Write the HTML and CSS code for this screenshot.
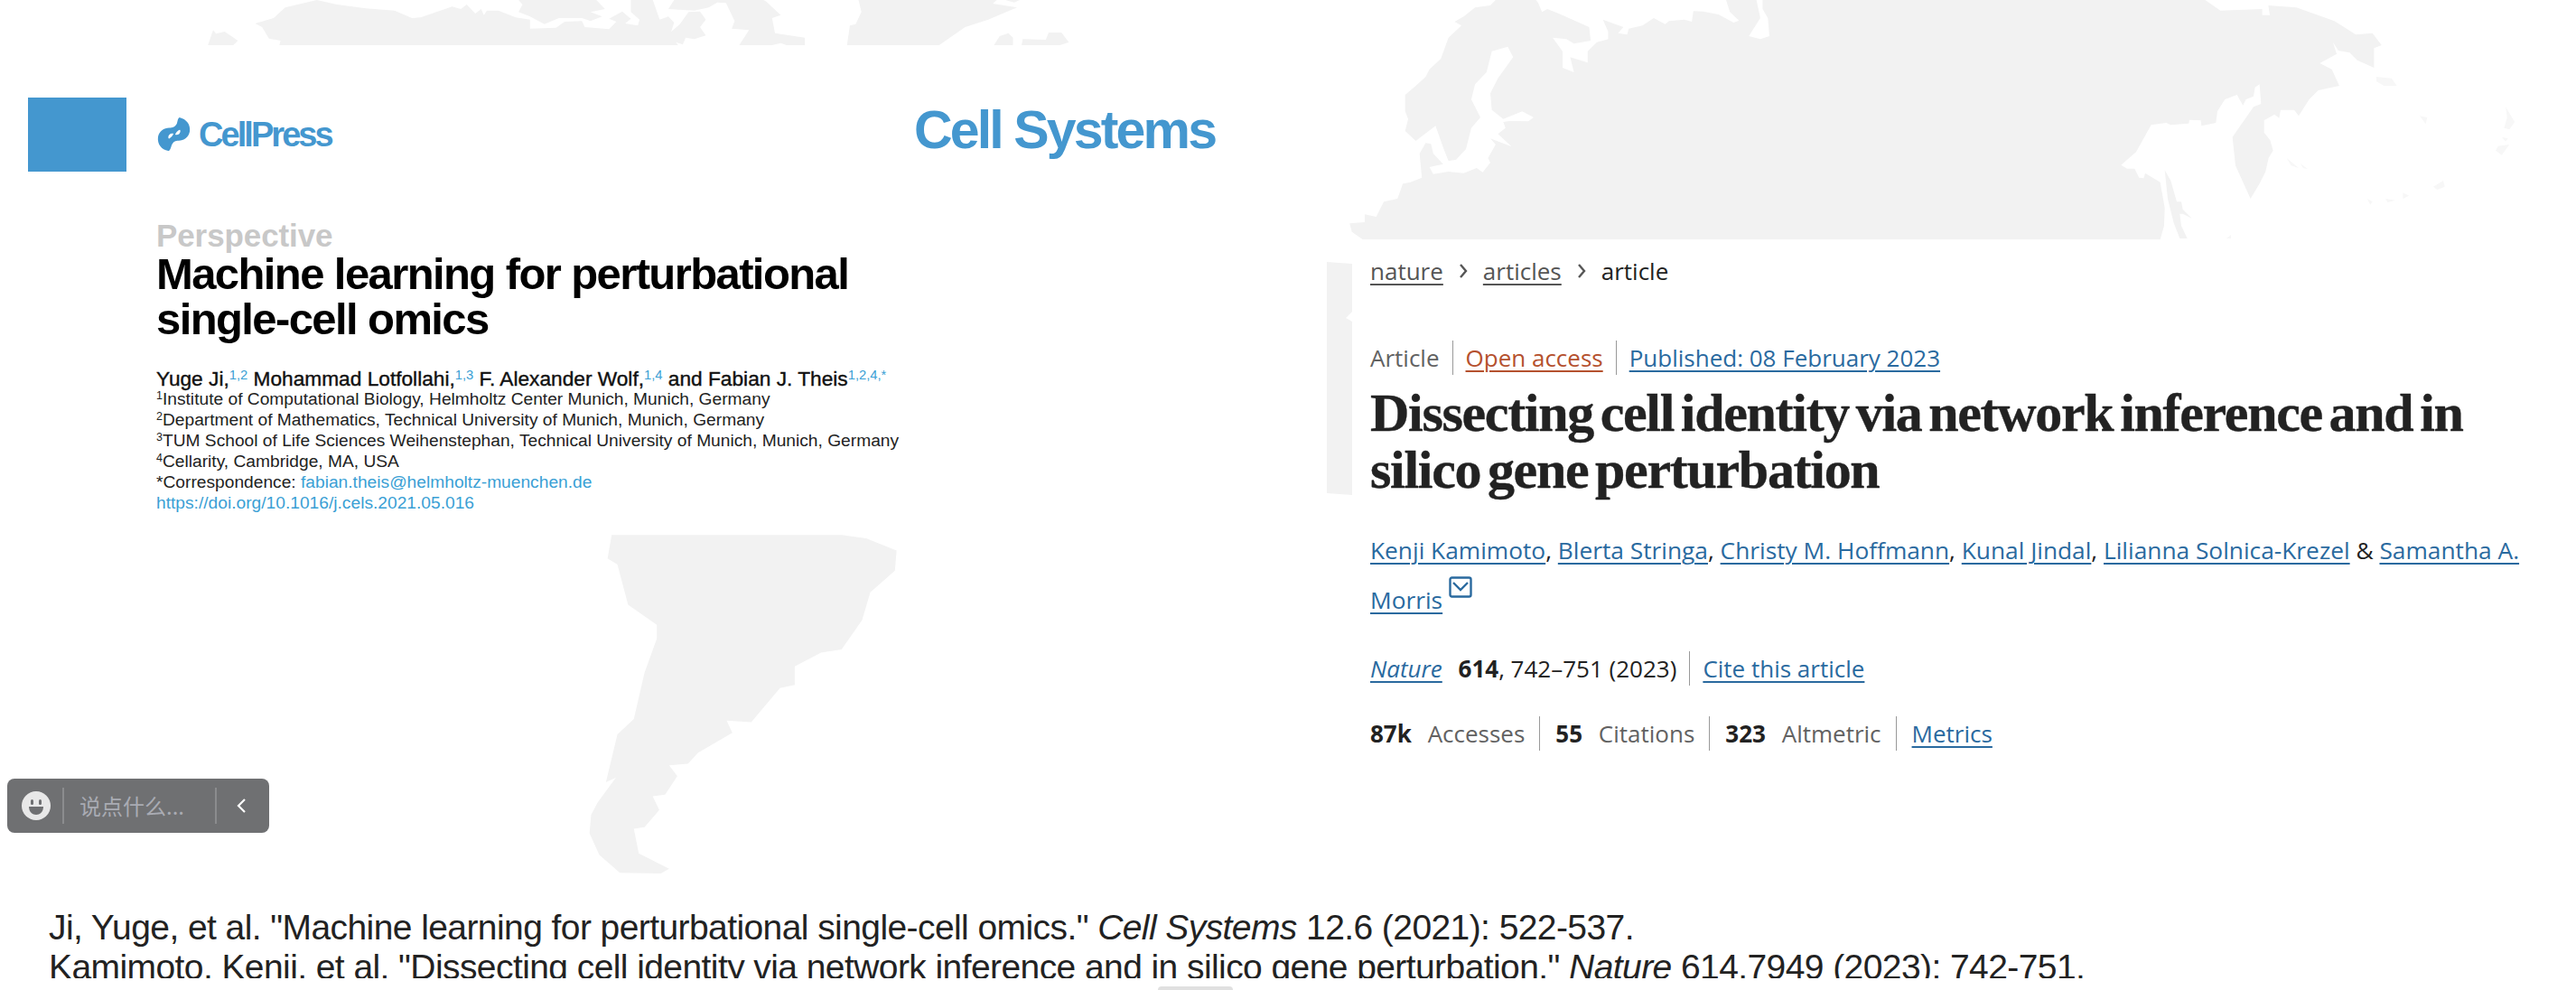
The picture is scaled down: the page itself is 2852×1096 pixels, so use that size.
FILE: index.html
```html
<!DOCTYPE html>
<html lang="en">
<head>
<meta charset="utf-8">
<title>Perturbation papers</title>
<link rel="stylesheet" href="styles.css">
</head>
<body>
<main class="slide">
  <svg class="map" viewBox="0 0 2852 1096" width="2852" height="1096" aria-hidden="true">
    <g class="land" transform="translate(220,0) scale(0.638,0.3333)">
      <path d="M16 150L25 100L30 112L45 105L68 135L60 150Z"/>
      <path d="M140 150L142 135L122 128L110 90L98 78L130 60L150 25L205 0L240 15L290 28L340 35L370 60L385 58L440 22L455 30L465 15L480 45L490 30L495 50L500 35L520 35L550 58L575 65L575 95L620 92L635 72L665 70L670 90L712 97L725 72L712 62L735 38L750 62L740 78L762 85L765 65L750 40L750 0L788 0L800 65L815 55L825 75L820 105L835 80L850 40L870 38L880 65L870 90L880 118L860 130L845 125L840 148L828 140L832 150Z"/>
      <path d="M555 0L562 15L555 40L575 55L600 80L625 60L665 60L680 70L700 55L680 40L705 30L690 0Z"/>
      <path d="M825 0L815 30L860 35L885 25L900 8L915 10L930 70L925 95L955 100L938 150L995 150L1010 143L1020 150L1052 150L1052 125L1000 110L995 60L1010 50L985 5L980 0Z"/>
      <path d="M1125 150L1130 85L1140 80L1150 40L1145 0L1385 0L1378 12L1420 25L1370 65L1330 90L1285 150Z"/>
      <path d="M1400 0L1425 0L1415 8Z"/>
      <path d="M1380 150L1390 120L1405 110L1413 125L1413 150Z"/>
      <path d="M1428 150L1430 130L1470 132L1475 108L1497 108L1510 140L1495 150Z"/>
    </g>
    <g class="land" transform="translate(1490,0) scale(0.842,0.3333)">
      <path d="M197 0L190 18L170 25L155 55L143 72L152 85L135 125L130 160L125 195L110 230L105 255L92 285L78 315L78 370L82 395L78 435L92 468L118 418L128 490L135 535L145 530L158 495L165 425L177 390L165 330L170 280L185 240L192 170L213 155L220 190L200 260L190 310L192 365L207 395L232 370L247 390L240 403L215 402L207 405L210 425L200 445L218 487L190 460L197 480L187 525L190 540L180 572L172 558L155 575L135 570L115 578L110 555L122 548L128 545L115 510L112 478L105 475L97 510L100 590L85 605L75 610L68 660L50 670L40 720L25 712L25 738L5 742L8 770L22 795L1000 795L1000 180L1303 180L1298 140L1305 168L1320 175L1330 200L1352 225L1352 160L1362 150L1350 110L1328 115L1300 70L1250 25L1213 18L1215 50L1205 50L1205 30L1150 35L1130 0L548 0L548 30L555 60L557 120L545 130L530 120L545 60L540 0L500 0L505 40L517 68L510 75L490 48L470 38L457 37L455 72L445 65L425 70L420 80L405 60L390 85L372 95L370 115L358 110L365 90L338 65L345 105L345 130L330 140L318 170L318 208L295 190L300 240L285 225L285 170L272 125L290 130L300 145L322 135L320 90L280 45L265 30L258 40L253 10L250 0Z"/>
      <path class="isle" d="M1355 255L1375 260L1382 285L1365 285L1355 270Z"/>
      <path class="isle" d="M1525 355L1537 405L1530 430L1523 425L1527 390Z"/>
      <path class="isle" d="M1515 485L1530 480L1520 515L1512 500Z"/>
      <path class="isle" d="M1520 455L1528 460L1525 470Z"/>
      <path class="isle" d="M1412 385L1422 390L1420 412Z"/>
      <path class="isle" d="M1343 660L1350 670L1347 680Z"/>
      <path class="isle" d="M1367 660L1380 665L1370 672Z"/>
      <path class="isle" d="M1390 640L1398 650L1390 660Z"/>
      <path class="isle" d="M1430 620L1443 600L1445 620L1435 630Z"/>
    </g>
    <g class="land" transform="translate(2300,60) scale(0.3333)">
      <path d="M0 615L275 615L288 570L290 510L275 425L225 395L220 412L205 410L190 380L165 380L145 368L195 325L245 235L295 228L310 235L370 230L372 218L410 220L412 238L460 228L465 190L490 150L530 135L550 170L560 150L585 140L590 110L605 100L610 165L585 175L515 275L525 370L575 480L605 430L625 390L635 345L650 320L640 285L620 260L620 220L655 200L670 212L675 185L720 185L735 205L770 150L800 120L870 105L845 50L805 30L860 0L0 0Z"/>
      <path d="M290 385L310 420L330 490L345 490L350 515L380 545L350 530L340 530L345 570L365 612L340 612L320 560L300 480Z"/>
      <path class="isle" d="M695 345L735 378L710 370Z"/>
      <path class="isle" d="M740 362L765 382L750 378Z"/>
      <path class="isle" d="M495 612L510 600L510 612Z"/>
    </g>
    <g class="land" transform="translate(0,560) scale(0.909,0.342)">
      <path d="M745 94L1025 94L1055 105L1092 145L1090 210L1060 280L1050 370L1025 465L1000 475L968 520L968 580L950 590L915 700L885 695L892 735L850 800L838 835L815 840L825 875L810 935L795 940L803 985L785 1040L772 1045L778 1125L815 1175L805 1190L755 1188L730 1130L718 1060L720 1000L728 960L750 880L738 895L752 740L772 690L785 540L800 430L800 385L765 320L752 190L740 170Z"/>
    </g>
    <path class="strip" d="M1469 290L1497 292L1497 345L1490 352L1497 356L1497 548L1469 546Z"/>
  </svg>

  <div class="papers">
    <section class="cell">
      <header class="cell-head">
        <div class="cell-tab"></div>
        <div class="cellpress">
          <svg class="cellpress-mark" viewBox="0 0 40 40" width="38" height="38" aria-hidden="true">
            <path d="M26 0C34 2 39 8 38 16C37 23 31 27 25 27C21 27 19 28 17 32C16 35 15 39 13 39C5 38 0 31 1 23C2 16 8 12 14 12C18 12 21 11 23 7C24 4 24 1 26 0ZM19 19C16 18 13 20 13 23C13 25 14 25 15 24C17 23 18 21 19 19ZM21 20C24 21 27 19 27 16C27 14 26 14 25 15C23 16 22 18 21 20Z"/>
          </svg>
          <span class="cellpress-name">CellPress</span>
        </div>
        <div class="journal">Cell Systems</div>
      </header>
      <div class="cell-body">
        <div class="kicker">Perspective</div>
        <h1 class="cell-title">Machine learning for perturbational<br>single-cell omics</h1>
        <p class="cell-authors">Yuge Ji,<sup>1,2</sup> Mohammad Lotfollahi,<sup>1,3</sup> F. Alexander Wolf,<sup>1,4</sup> and Fabian J. Theis<sup>1,2,4,*</sup></p>
        <ul class="affils">
          <li><sup>1</sup>Institute of Computational Biology, Helmholtz Center Munich, Munich, Germany</li>
          <li><sup>2</sup>Department of Mathematics, Technical University of Munich, Munich, Germany</li>
          <li><sup>3</sup>TUM School of Life Sciences Weihenstephan, Technical University of Munich, Munich, Germany</li>
          <li><sup>4</sup>Cellarity, Cambridge, MA, USA</li>
          <li>*Correspondence: <span class="cyan">fabian.theis@helmholtz-muenchen.de</span></li>
          <li class="cyan">https://doi.org/10.1016/j.cels.2021.05.016</li>
        </ul>
      </div>
    </section>

    <section class="nature">
      <nav class="crumbs">
        <a class="crumb">nature</a>
        <svg class="chev" viewBox="0 0 12 18" width="12" height="18" aria-hidden="true"><path d="M3 2L9 9L3 16"/></svg>
        <a class="crumb">articles</a>
        <svg class="chev" viewBox="0 0 12 18" width="12" height="18" aria-hidden="true"><path d="M3 2L9 9L3 16"/></svg>
        <span class="crumb-now">article</span>
      </nav>
      <ul class="meta meta-type">
        <li class="muted">Article</li>
        <li><a class="rust">Open access</a></li>
        <li><a class="blue">Published: 08 February 2023</a></li>
      </ul>
      <h2 class="nature-title">Dissecting cell identity via network inference and in silico gene perturbation</h2>
      <p class="nature-authors"><a class="blue">Kenji Kamimoto</a>, <a class="blue">Blerta Stringa</a>, <a class="blue">Christy M. Hoffmann</a>, <a class="blue">Kunal Jindal</a>, <a class="blue">Lilianna Solnica-Krezel</a> &amp; <a class="blue">Samantha A.</a> <a class="blue">Morris</a> <svg class="mail" viewBox="0 0 26 24" width="26" height="24" aria-hidden="true"><rect x="1.5" y="1.5" width="23" height="21" rx="2"/><path d="M5 7L13 15L21 7"/></svg></p>
      <ul class="meta meta-cite">
        <li><a class="blue ital">Nature</a> <b class="vol">614</b>, 742–751 (2023)</li>
        <li><a class="blue">Cite this article</a></li>
      </ul>
      <ul class="meta meta-stats">
        <li><b class="stat">87k</b> <span class="muted">Accesses</span></li>
        <li><b class="stat">55</b> <span class="muted">Citations</span></li>
        <li><b class="stat">323</b> <span class="muted">Altmetric</span></li>
        <li><a class="blue">Metrics</a></li>
      </ul>
    </section>
  </div>

  <footer class="refs">
    <p>Ji, Yuge, et al. "Machine learning for perturbational single-cell omics." <i>Cell Systems</i> 12.6 (2021): 522-537.</p>
    <p>Kamimoto, Kenji, et al. "Dissecting cell identity via network inference and in silico gene perturbation." <i>Nature</i> 614.7949 (2023): 742-751.</p>
  </footer>

  <aside class="chat">
    <svg class="smile" viewBox="0 0 32 32" width="32" height="32" aria-hidden="true">
      <circle class="smile-face" cx="16" cy="16" r="16"/>
      <rect class="smile-ink" x="10" y="9" width="3" height="6" rx="1.5"/>
      <rect class="smile-ink" x="19" y="9" width="3" height="6" rx="1.5"/>
      <path class="smile-ink" d="M8 17H24C24 23 20 26 16 26C12 26 8 23 8 17Z"/>
    </svg>
    <span class="chat-text">说点什么...</span>
    <span class="chat-toggle"><svg viewBox="0 0 12 18" width="12" height="18" aria-hidden="true"><path d="M10 2L3 9L10 16"/></svg></span>
  </aside>
  <div class="tab-peek"></div>
</main>
</body>
</html>
```

FILE: styles.css
```css
* { box-sizing: border-box; }
html, body { margin: 0; padding: 0; background: #fff; }
body { font-family: "Liberation Sans", Arial, sans-serif; }
ul { list-style: none; margin: 0; padding: 0; }
p, h1, h2 { margin: 0; }

.slide { position: relative; width: 2852px; height: 1096px; overflow: hidden; background: #fff; }
.map { position: absolute; left: 0; top: 0; }
.land path { fill: #f2f2f2; }
.land .isle { fill: #f7f7f7; }
.strip { fill: #f2f2f2; }

.papers { position: relative; display: flex; height: 1000px; }

.cell { width: 1517px; flex: none; padding-top: 108px; }
.cell-head { display: flex; align-items: flex-start; }
.cell-tab { width: 109px; height: 82px; margin-left: 31px; background: #4497cf; }
.cellpress { display: flex; align-items: center; gap: 8px; margin-left: 34px; margin-top: 22px; color: #4497cf; }
.cellpress-mark { fill: #4497cf; fill-rule: evenodd; }
.cellpress-name { font-size: 38px; font-weight: 700; letter-spacing: -2.95px; line-height: 38px; width: 150px; }
.journal { margin-left: 642px; margin-top: 3px; font-size: 59px; line-height: 66px; font-weight: 700; letter-spacing: -2.85px; color: #4497cf; white-space: nowrap; }

.cell-body { padding-left: 173px; padding-top: 53px; }
.kicker { font-size: 35px; line-height: 36px; font-weight: 700; color: #c8c8c8; letter-spacing: -0.1px; }
.cell-title { font-size: 49px; line-height: 50px; font-weight: 700; letter-spacing: -1.6px; color: #000; margin-top: -1px; }
.cell-authors { font-size: 22.7px; line-height: 24px; font-weight: 400; color: #111; margin-top: 29px; -webkit-text-stroke: 0.4px #111; white-space: nowrap; }
.cell-authors sup { color: #3a9fd5; -webkit-text-stroke: 0; }
sup { font-size: 0.65em; line-height: 0; vertical-align: 0.45em; }
.affils { font-size: 19.2px; line-height: 22.9px; color: #222; }
.cyan { color: #3a9fd5; }

.nature { flex: 1; padding-top: 281px; font-family: "Open Sans", "Noto Sans", sans-serif; color: #222; font-size: 26px; }
.crumbs { display: flex; align-items: center; gap: 16px; height: 38px; font-size: 26px; }
.crumb { color: #555; text-decoration: underline; text-underline-offset: 4px; text-decoration-thickness: 2px; }
.crumb-now { color: #222; }
.chev { fill: none; stroke: #555; stroke-width: 2.4; }

.meta { display: flex; align-items: center; }
.meta li { padding: 0 14px; border-left: 1px solid #999; line-height: 38px; }
.meta li:first-child { padding-left: 0; border-left: 0; }
.meta-type { margin-top: 58px; }
.meta-cite { margin-top: 29px; }
.meta-stats { margin-top: 34px; }
.meta-stats li { padding: 0 16px 0 17px; }
.meta b { font-weight: 700; color: #222; }
.vol { margin-left: 11px; }
.stat { margin-right: 11px; }
.muted { color: #626262; }
.rust { color: #b5512e; text-decoration: underline; text-underline-offset: 4px; text-decoration-thickness: 2px; }
.blue { color: #2a6a9f; text-decoration: underline; text-underline-offset: 4px; text-decoration-thickness: 2px; }
.ital { font-style: italic; }

.nature-title { font-family: "Liberation Serif", serif; font-weight: 700; font-size: 60px; line-height: 63px; letter-spacing: -1.3px; word-spacing: -6px; color: #222; margin-top: 11px; -webkit-text-stroke: 0.4px #222; }
.nature-authors { margin-top: 30px; line-height: 55px; font-size: 26.3px; }
.mail { fill: none; stroke: #2a6a9f; stroke-width: 2.4; vertical-align: 12px; }

.refs { position: relative; height: 83px; overflow: hidden; padding: 5px 0 0 54px; font-size: 39px; line-height: 44px; color: #222; letter-spacing: -0.58px; }
.refs p { white-space: nowrap; }

.chat { position: absolute; left: 8px; top: 862px; width: 290px; height: 60px; background: #6f7072; border-radius: 8px; display: flex; align-items: center; padding-left: 16px; }
.smile { flex: none; }
.smile-face { fill: #e8e8e8; }
.smile-ink { fill: #6f7072; }
.chat-text { margin-left: 13px; border-left: 2px solid #8b8c8e; height: 40px; width: 169px; padding-left: 17px; font-family: "Noto Sans CJK SC", sans-serif; font-size: 24px; line-height: 40px; color: #a9abb3; white-space: nowrap; }
.chat-toggle { border-left: 2px solid #8b8c8e; height: 40px; width: 55px; display: flex; align-items: center; justify-content: center; }
.chat-toggle svg { fill: none; stroke: #fff; stroke-width: 2.2; }

.tab-peek { position: absolute; left: 1282px; top: 1092px; width: 83px; height: 4px; background: #e0e0e0; border-radius: 4px 4px 0 0; }
```
